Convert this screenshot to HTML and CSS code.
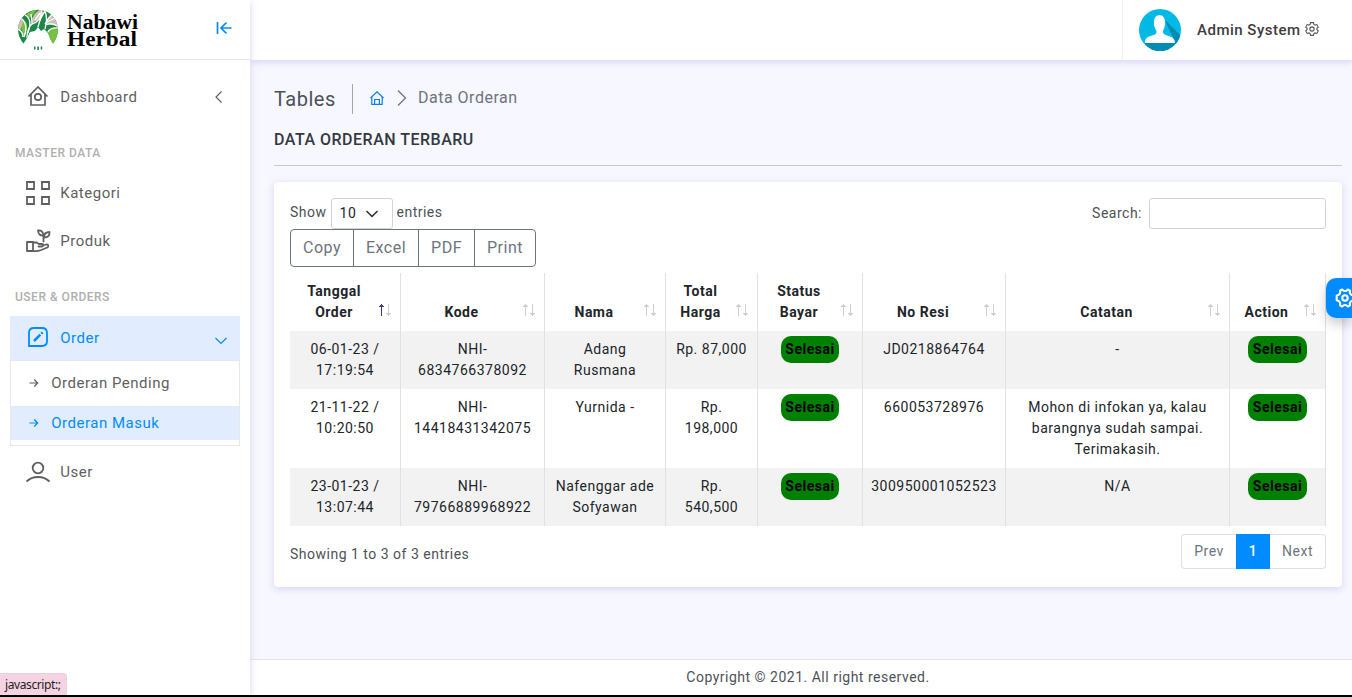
FILE: index.html
```html
<!DOCTYPE html>
<html lang="id">
<head>
<meta charset="utf-8">
<title>Data Orderan</title>
<link rel="stylesheet" href="styles.css">
</head>
<body>
<div class="app">
  <aside class="sidebar">
    <div class="brand">
      <svg class="logo" width="42" height="42" viewBox="0 0 42 42">
        <defs><clipPath id="dome"><path d="M21 .8A20 20 0 0 1 41 21Q40.500 29 36 34.500Q33 30 31 24L27 20L24 22L21 18L18 22L13 23Q10 30 6.500 34.500Q1.500 29 1 21A20 20 0 0 1 21 .8Z"/></clipPath></defs>
        <g clip-path="url(#dome)">
          <path fill="#1c8747" d="M0 0h42v42H0z"/>
          <path fill="#7ac143" d="M4 9L9 13Q12 18 7 27Q3 20 4 9ZM9 5L20 0L16 6L12 9ZM30 23Q34 17 42 20V36H35Z"/>
          <path fill="#c9c1b1" d="M0 18L4 9L6 13L3 22ZM15 14Q14 5 24 0Q29 5 22 11ZM29 15Q30 7 35 5L42 12V18Q35 15 29 15Z"/>
          <path stroke="#fff" stroke-width="1.300" fill="none" d="M4 9Q12 16 7 28M0 20Q6 22 6 28M8 6Q16 10 11 24M14 5Q15 12 15 15Q24 13 25 0M15 15Q10 19 10 29M28 2Q31 10 28 20M28 2Q23 9 21 18M28 15Q31 9 36 5M28 16Q36 13 42 18M31 23Q33 18 42 19M30 13L38 9M18 11L23 4"/>
        </g>
        <path fill="#1c8747" d="M17 37.500h1.500v3H17zM20.300 37.500h1.600v3.500h-1.600zM23.700 37.500h1.500v3h-1.500z"/>
      </svg>
      <svg class="wordmark" width="76" height="46" viewBox="0 0 76 46">
        <text x="1" y="19.500" textLength="71" lengthAdjust="spacingAndGlyphs">Nabawi</text>
        <text x="1" y="37" textLength="70" lengthAdjust="spacingAndGlyphs">Herbal</text>
      </svg>
      <svg class="collapse" width="16" height="14" viewBox="0 0 16 14" fill="none" stroke="#008cff" stroke-width="1.700"><path d="M1.500 1V13M15.500 7H5.500M10.500 1.500L5 7L10.500 12.500"/></svg>
    </div>
    <nav class="menu">
      <a class="item">
        <svg width="24" height="24" viewBox="0 0 24 24" fill="none" stroke="#5f5f5f" stroke-width="1.700"><path d="M2.500 11.500L12 2L21.500 11.500M5 9.500V20H19V9.500"/><circle cx="12" cy="12" r="3.200"/></svg>
        <span class="label">Dashboard</span>
        <svg class="caret" width="12" height="14" viewBox="0 0 12 14" fill="none" stroke="#5f5f5f" stroke-width="1.200"><path d="M8.500 1.500L3 7L8.500 12.500"/></svg>
      </a>
      <div class="heading">MASTER DATA</div>
      <a class="item">
        <svg width="26" height="26" viewBox="0 0 26 26" fill="none" stroke="#5f5f5f" stroke-width="1.800"><path d="M2 2h7v7H2zM17 2h7v7h-7zM2 17h7v7H2zM17 17h7v7h-7z"/></svg>
        <span class="label">Kategori</span>
      </a>
      <a class="item">
        <svg width="26" height="26" viewBox="0 0 26 26" fill="none" stroke="#5f5f5f" stroke-width="1.800" stroke-linejoin="round" stroke-linecap="round"><path d="M2 14h6v9H2zM8 14.500h3.500l2.500 1.500h3c2 0 1.500 2.500-.5 2.500h-3M17.500 17.500l4-1c2-.3 2.500 2 .8 3l-6 2.500q-4 1.500-8 1M18.500 13.500V7.500M18.500 7.500q-5 .5-5.500-5q5-.5 5.500 5M19 9.500q0-5.500 5.500-5.500q.5 5.500-5.500 5.500"/></svg>
        <span class="label">Produk</span>
      </a>
      <div class="heading">USER &amp; ORDERS</div>
      <div class="group">
        <a class="item open">
          <svg width="24" height="24" viewBox="0 0 24 24" fill="none" stroke="#008cff" stroke-width="1.800"><path d="M3 21V8Q3 3 8 3H16Q21 3 21 8V16Q21 21 16 21Z"/><path stroke-width="2.500" d="M8 16L14.300 9.700M15.300 8.700L16.600 7.400"/></svg>
          <span class="label">Order</span>
          <svg class="caret" width="14" height="12" viewBox="0 0 14 12" fill="none" stroke="#008cff" stroke-width="1.200"><path d="M1.500 4L7 9.500L12.500 4"/></svg>
        </a>
        <div class="submenu">
          <a class="sub"><svg width="10" height="10" viewBox="0 0 10 10" fill="none" stroke="currentColor" stroke-width="1.200"><path d="M.5 5H8.500M5.200 1.500L8.700 5L5.200 8.500"/></svg><span>Orderan Pending</span></a>
          <a class="sub current"><svg width="10" height="10" viewBox="0 0 10 10" fill="none" stroke="currentColor" stroke-width="1.200"><path d="M.5 5H8.500M5.200 1.500L8.700 5L5.200 8.500"/></svg><span>Orderan Masuk</span></a>
        </div>
      </div>
      <a class="item user">
        <svg width="26" height="24" viewBox="0 0 26 24" fill="none" stroke="#5f5f5f" stroke-width="1.800"><circle cx="13" cy="8" r="5.300"/><path d="M1.500 21.500Q6 17 13 17T24.500 21.500"/></svg>
        <span class="label">User</span>
      </a>
    </nav>
  </aside>
  <div class="main">
    <header class="topbar">
      <div class="account">
        <svg width="42" height="42" viewBox="0 0 42 42">
          <defs><clipPath id="disc"><circle cx="21" cy="21" r="21"/></clipPath></defs>
          <g clip-path="url(#disc)"><path fill="#00b9e4" d="M0 0h42v42H0z"/><path fill="#008bb0" d="M26 11L42 27V42H6V34L36 33Z"/>
          <path fill="#fff" d="M6 34Q5.500 29 10 27.500L16 25.500Q18 24 17.500 22Q15.500 19 15 16Q14 6.500 20.500 6Q27 6.500 26 16Q25.500 19 24 22Q23.500 24 25.500 25.500L31 27.500Q36 29 36 34Z"/></g>
        </svg>
        <span class="account-name">Admin System</span>
        <svg class="cog" width="14" height="14" viewBox="0 0 24 24" fill="none" stroke="#555" stroke-width="1.900"><path d="M9.500 1h5l.7 3.200 2 1.200 3.100-1 2.500 4.300-2.400 2.200v2.200l2.400 2.200-2.500 4.300-3.100-1-2 1.200-.7 3.200h-5l-.7-3.200-2-1.200-3.100 1-2.500-4.300 2.400-2.200v-2.200L1.200 8.700l2.500-4.300 3.100 1 2-1.200Z"/><circle cx="12" cy="12" r="3.700"/></svg>
      </div>
    </header>
    <main class="content">
      <div class="crumbs">
        <div class="section">Tables</div>
        <svg class="home" width="14" height="14" viewBox="0 0 14 14" fill="none" stroke="#0d7dfd" stroke-width="1.200"><path d="M.5 7L7 .9L13.500 7M1.800 6V13.300H12.200V6M4.600 13V8.500H9.400V13"/></svg>
        <svg class="sep" width="10" height="18" viewBox="0 0 10 18" fill="none" stroke="#6c757d" stroke-width="1.300"><path d="M1 1.500L8.500 9L1 16.500"/></svg>
        <span class="here">Data Orderan</span>
      </div>
      <h6 class="title">DATA ORDERAN TERBARU</h6>
      <section class="card">
        <div class="controls">
          <div class="left">
            <div class="length">Show <span class="select">10<svg width="12" height="8" viewBox="0 0 12 8" fill="none" stroke="#343a40" stroke-width="1.700" stroke-linecap="round" stroke-linejoin="round"><path d="M1 1.500L6 6.500L11 1.500"/></svg></span> entries</div>
            <div class="buttons"><span class="b-copy">Copy</span><span class="b-excel">Excel</span><span class="b-pdf">PDF</span><span class="b-print">Print</span></div>
          </div>
          <label class="search">Search:<input type="text"></label>
        </div>
        <table class="orders">
          <colgroup><col class="c1"><col class="c2"><col class="c3"><col class="c4"><col class="c5"><col class="c6"><col class="c7"><col class="c8"></colgroup>
          <thead><tr>
            <th class="asc">Tanggal Order</th><th>Kode</th><th>Nama</th><th>Total Harga</th><th>Status Bayar</th><th>No Resi</th><th>Catatan</th><th>Action</th>
          </tr></thead>
          <tbody>
            <tr><td>06-01-23 / 17:19:54</td><td>NHI-<br>6834766378092</td><td>Adang Rusmana</td><td>Rp. 87,000</td><td><b class="done">Selesai</b></td><td>JD0218864764</td><td>-</td><td><b class="done">Selesai</b></td></tr>
            <tr><td>21-11-22 / 10:20:50</td><td>NHI-<br>14418431342075</td><td>Yurnida -</td><td>Rp. 198,000</td><td><b class="done">Selesai</b></td><td>660053728976</td><td>Mohon di infokan ya, kalau barangnya sudah sampai. Terimakasih.</td><td><b class="done">Selesai</b></td></tr>
            <tr><td>23-01-23 / 13:07:44</td><td>NHI-<br>79766889968922</td><td>Nafenggar ade Sofyawan</td><td>Rp. 540,500</td><td><b class="done">Selesai</b></td><td>300950001052523</td><td>N/A</td><td><b class="done">Selesai</b></td></tr>
          </tbody>
        </table>
        <div class="bottom">
          <div class="info">Showing 1 to 3 of 3 entries</div>
          <div class="pages"><span class="prev">Prev</span><span class="active">1</span><span class="next">Next</span></div>
        </div>
      </section>
    </main>
    <footer class="footer">Copyright © 2021. All right reserved.</footer>
  </div>
  <div class="switcher"><svg width="20" height="20" viewBox="0 0 24 24" fill="none" stroke="#fff" stroke-width="2.500" stroke-linejoin="round"><path d="M8.500 1.800Q12 5.500 15.500 1.800L18 3.300Q16.800 8 22 9.200V14.800Q16.800 16 18 20.700L15.500 22.200Q12 18.500 8.500 22.200L6 20.700Q7.200 16 2 14.800V9.200Q7.200 8 6 3.300Z"/><circle cx="12" cy="12" r="3.300"/></svg></div>
  <div class="link-status">javascript:;</div>
</div>
</body>
</html>
```
FILE: styles.css
```css
*{box-sizing:border-box}
body{margin:0;font:14px/21px Roboto,"Liberation Sans",sans-serif;letter-spacing:.5px;color:#4c5258;background:#f7f7ff}
svg{display:block;flex:none}
.app{display:flex;width:1352px;height:697px;overflow:hidden;position:relative;border-bottom:2px solid #000}
.sidebar{width:250px;background:#fff;position:relative;z-index:2;box-shadow:0 2px 6px rgba(218,218,253,.65),0 2px 6px rgba(206,206,238,.54)}
.brand{height:60px;display:flex;align-items:flex-start;border-bottom:1px solid #e4e4e4;padding:9px 18px 0 17px}
.wordmark{margin:0 0 0 7px;font:bold 20px "Liberation Serif",serif;letter-spacing:0;fill:#000}
.collapse{margin:12px 0 0 auto}
.menu{padding:15px 10px 0;color:#5f5f5f;font-size:15px}
.item{display:flex;align-items:center;height:44px;padding:0 12px 0 15px}
.item>svg:first-child{width:26px}
.item .label{margin-left:9.300px}
.caret{margin-left:auto}
.item:first-child .caret{margin-right:3px}
.heading{font-size:12px;font-weight:500;color:#b0afaf;padding:24px 5px 7px;line-height:21px}
.item + .item{margin-top:4px}
.group{margin-top:1px}
.item.open{background:#e1ecff;color:#008cff}
.item.open svg:first-child{margin-top:-3px}
.item.open .caret{margin-right:0;margin-top:3px}
.submenu{border:1px solid #e8e8e8;height:86px;padding-top:5px;display:flex;flex-direction:column;gap:6px}
.sub{display:flex;align-items:center;height:34px;padding-left:18px;gap:12.300px}
.sub.current{background:#e1ecff;color:#008cff}
.user{margin-top:4px}
.main{flex:1;display:flex;flex-direction:column;min-width:0}
.topbar{height:60px;background:#fff;display:flex;justify-content:flex-end;box-shadow:0 2px 6px rgba(218,218,253,.65),0 2px 6px rgba(206,206,238,.54);z-index:1}
.account{width:230px;border-left:1px solid #f0f0f0;display:flex;align-items:center;padding-left:16px;color:#413c3c;font-size:15px;font-weight:500}
.account-name{margin-left:16px;margin-right:4px}
.cog{margin-top:-3px}
.content{flex:1;padding:24px 10px 0 24px}
.crumbs{display:flex;align-items:center;height:30px}
.section{font-size:20px;line-height:30px;border-right:1px solid #aaa4a4;padding-right:17px;width:79px}
.home{margin:-2px 13px 0 17px}
.sep{margin-right:11px;margin-top:-2px}
.here{font-size:16px;color:#6c757d;margin-top:-3px}
.title{margin:16px 0;height:36px;border-bottom:1px solid #c8cad3;font-size:16px;line-height:20px;font-weight:500;color:#32393f}
.card{background:#fff;border-radius:4px;padding:16px;height:405px;box-shadow:0 2px 6px rgba(218,218,253,.65),0 2px 6px rgba(206,206,238,.54)}
.controls{display:flex;justify-content:space-between;height:75px}
.length{height:31px;display:flex;align-items:center;white-space:pre;padding-bottom:2px}
.select{display:inline-flex;align-items:center;height:31px;width:62px;border:1px solid #ced4da;border-radius:3px;padding-left:8px;gap:10px;color:#212529;margin-top:2px}
.buttons{display:flex;height:38px;width:246px;border:1px solid #6c757d;border-radius:4px;font-size:16px;line-height:35px;color:#6c757d;text-align:center}
.buttons span+span{border-left:1px solid #6c757d}
.b-copy{width:62px}
.b-excel{width:65px}
.b-pdf{width:56px}
.b-print{flex:1}
.search{display:flex;align-items:center;gap:7px;height:31px}
.search input{width:177px;height:31px;border:1px solid #ced4da;border-radius:3px;padding:0}
.orders{table-layout:fixed;width:1036px;border-collapse:separate;border-spacing:0;color:#212529;text-align:center}
.c1{width:111px}.c2{width:144px}.c3{width:121px}.c4{width:92px}
.c5{width:105px}.c6{width:143px}.c7{width:224px}.c8{width:96px}
.orders th,.orders td{padding:8px;border-right:1px solid #dee2e6;vertical-align:top}
.orders th{padding-right:30px;height:58px;vertical-align:bottom;font-weight:700;position:relative}
.orders th:nth-child(8){padding-left:6px;padding-right:28px}
.orders th::before,.orders th::after{content:"";position:absolute;top:31px;width:7px;height:12px;color:#cdcecf}
.orders th::before{right:15px;background:linear-gradient(currentColor,currentColor) 3px 0/1px 12px no-repeat,linear-gradient(currentColor,currentColor) 2px 1px/3px 1px no-repeat,linear-gradient(currentColor,currentColor) 1px 2px/5px 1px no-repeat}
.orders th::after{right:8px;background:linear-gradient(currentColor,currentColor) 3px 0/1px 12px no-repeat,linear-gradient(currentColor,currentColor) 2px 10px/3px 1px no-repeat,linear-gradient(currentColor,currentColor) 1px 9px/5px 1px no-repeat}
.orders th.asc::before{color:#3d3c9b}
.orders tbody tr:nth-child(odd) td{background:#f2f2f2}
.done{background:green;color:#000;border-radius:10px;padding:5px 4.700px 6px}
.bottom{display:flex;justify-content:space-between;padding-top:8px}
.info{padding-top:10px}
.pages{display:flex;height:35px;line-height:33px;text-align:center;color:#6c757d}
.pages span{border:1px solid #dee2e6}
.pages .prev{width:55px;border-right:0;border-radius:4px 0 0 4px}
.pages .next{width:56px;border-left:0;border-radius:0 4px 4px 0}
.pages .active{width:34px;background:#008cff;color:#fff;border-color:#008cff;font-weight:500}
.footer{height:36px;border-top:1px solid #e4e4e4;background:#fff;text-align:center;line-height:35px;padding-left:14px}
.switcher{position:absolute;right:0;top:278px;width:26px;height:40px;background:#008cff;border-radius:10px 0 0 10px;padding:10px 0 0 9px;overflow:hidden;box-shadow:0 6px 12px rgba(0,0,0,.2);z-index:3}
.link-status{position:absolute;left:0;bottom:0;width:67px;height:22px;background:#f6d3e2;border-top:1px solid #e0d5d9;border-right:1px solid #e0d5d9;border-radius:0 4px 0 0;font:12px/22px "Noto Sans","Open Sans",sans-serif;letter-spacing:-.4px;color:#222;padding-left:5px;z-index:4}
```
